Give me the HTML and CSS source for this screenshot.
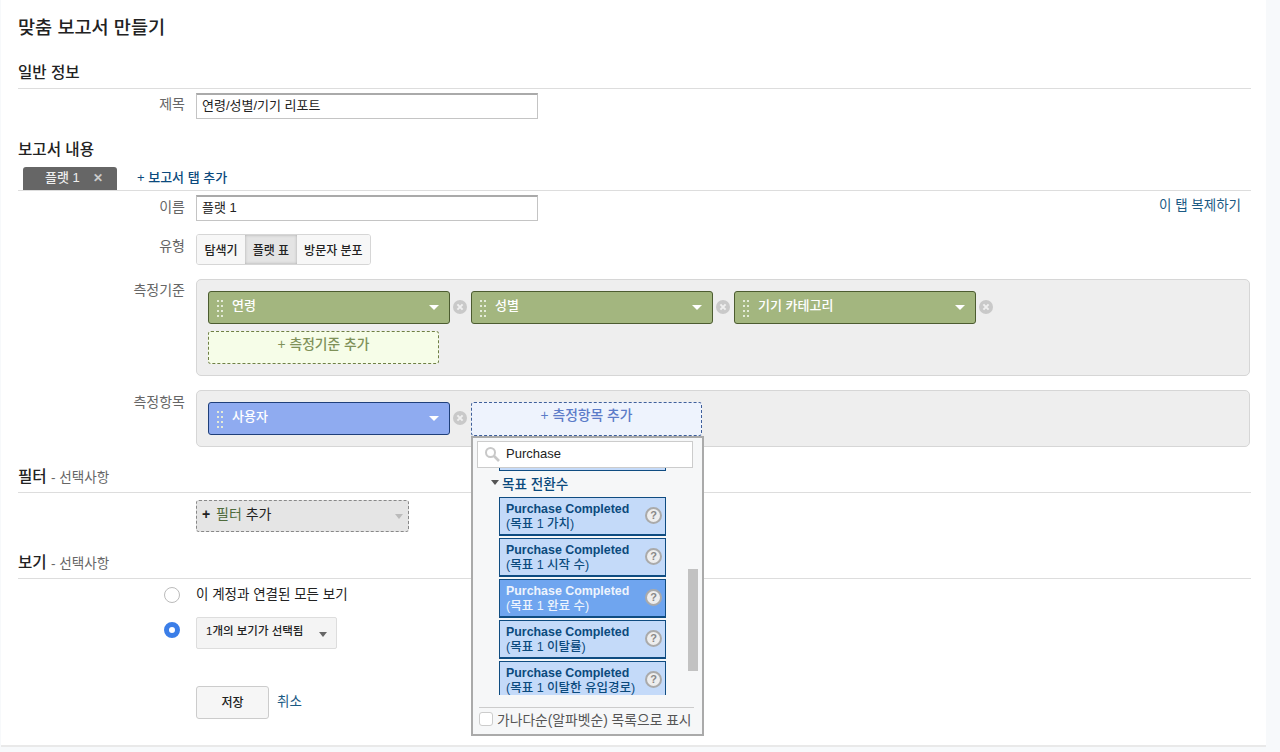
FILE: index.html
```html
<!DOCTYPE html>
<html lang="ko">
<head>
  <meta charset="UTF-8" />
  <title>맞춤 보고서 만들기</title>
  <link rel="stylesheet" href="styles.css">
</head>
<body>
  <svg class="defs" width="0" height="0">
    <symbol id="remove" viewBox="0 0 14 14">
      <circle cx="7" cy="7" r="7" fill="#c9c9c9"/>
      <path d="M4.4 4.4l5.2 5.2M9.6 4.4l-5.2 5.2" stroke="#efefef" stroke-width="2"/>
    </symbol>
    <symbol id="grip" viewBox="0 0 8 18">
      <path d="M1 1h2v2H1zM5 1h2v2H5zM1 6h2v2H1zM5 6h2v2H5zM1 11h2v2H1zM5 11h2v2H5zM1 16h2v2H1zM5 16h2v2H5z" fill="#e4ebd8"/>
    </symbol>
  </svg>

  <main class="panel">
    <h1>맞춤 보고서 만들기</h1>

    <h2 class="sec sec-info">일반 정보</h2>
    <div class="row row-title">
      <label>제목</label>
      <input class="txt" type="text" value="연령/성별/기기 리포트" />
    </div>

    <h2 class="sec-plain">보고서 내용</h2>
    <div class="tabs">
      <div class="tab">플랫 1 <span class="tab-x">✕</span></div>
      <a class="tab-add" href="#">+ 보고서 탭 추가</a>
    </div>

    <div class="row row-name">
      <label>이름</label>
      <input class="txt" type="text" value="플랫 1" />
      <a class="dup" href="#">이 탭 복제하기</a>
    </div>

    <div class="row row-type">
      <label>유형</label>
      <div class="seg">
        <button>탐색기</button><button class="on">플랫 표</button><button>방문자 분포</button>
      </div>
    </div>

    <div class="row row-dim">
      <label>측정기준</label>
      <div class="box">
        <div class="pills">
          <div class="pill green"><svg class="grip"><use href="#grip"/></svg><span>연령</span><i class="caret"></i></div>
          <svg class="rm"><use href="#remove"/></svg>
          <div class="pill green"><svg class="grip"><use href="#grip"/></svg><span>성별</span><i class="caret"></i></div>
          <svg class="rm"><use href="#remove"/></svg>
          <div class="pill green"><svg class="grip"><use href="#grip"/></svg><span>기기 카테고리</span><i class="caret"></i></div>
          <svg class="rm"><use href="#remove"/></svg>
        </div>
        <div class="add add-green">+ 측정기준 추가</div>
      </div>
    </div>

    <div class="row row-metric">
      <label>측정항목</label>
      <div class="box">
        <div class="pills">
          <div class="pill blue"><svg class="grip"><use href="#grip"/></svg><span>사용자</span><i class="caret"></i></div>
          <svg class="rm"><use href="#remove"/></svg>
          <div class="add-wrap">
            <div class="add add-blue">+ 측정항목 추가</div>
            <div class="popup">
              <div class="search">
                <svg width="16" height="16" viewBox="0 0 16 16"><circle cx="6.5" cy="6.5" r="4.5" fill="none" stroke="#c8c8c8" stroke-width="2"/><path d="M10 10l5 5" stroke="#c8c8c8" stroke-width="2.6"/></svg>
                <span>Purchase</span>
              </div>
              <div class="list">
                <div class="list-clip"></div>
                <div class="group"><i class="group-caret"></i>목표 전환수</div>
                <div class="item"><strong>Purchase Completed</strong><br>(목표 1 가치)<b>?</b></div>
                <div class="item"><strong>Purchase Completed</strong><br>(목표 1 시작 수)<b>?</b></div>
                <div class="item sel"><strong>Purchase Completed</strong><br>(목표 1 완료 수)<b>?</b></div>
                <div class="item"><strong>Purchase Completed</strong><br>(목표 1 이탈률)<b>?</b></div>
                <div class="item"><strong>Purchase Completed</strong><br>(목표 1 이탈한 유입경로)<b>?</b></div>
                <div class="thumb"></div>
              </div>
              <div class="sort"><i class="check"></i>가나다순(알파벳순) 목록으로 표시</div>
            </div>
          </div>
        </div>
      </div>
    </div>

    <h2 class="sec sec-filter">필터 <small>- 선택사항</small></h2>
    <div class="row row-filter">
      <label></label>
      <div class="filter"><b>+</b> <em>필터</em> 추가<i class="caret-grey"></i></div>
    </div>

    <h2 class="sec sec-view">보기 <small>- 선택사항</small></h2>
    <div class="row row-radio">
      <label><i class="radio"></i></label>
      <span class="radio-text">이 계정과 연결된 모든 보기</span>
    </div>
    <div class="row row-radio2">
      <label><i class="radio checked"></i></label>
      <div class="views">1개의 보기가 선택됨<i class="caret-dark"></i></div>
    </div>

    <div class="row row-save">
      <label></label>
      <button class="save">저장</button>
      <a class="cancel" href="#">취소</a>
    </div>
  </main>
</body>
</html>
```

FILE: styles.css
```css
* { box-sizing: border-box; }
html, body { height: 100%; }
body {
  margin: 0;
  background: #f7f9fb;
  color: #222;
  font-family: "Liberation Sans", "Noto Sans CJK KR", sans-serif;
  font-size: 13px;
  overflow: hidden;
}
.defs { position: absolute; }
.panel {
  width: 1265px;
  height: 747px;
  margin-left: 1px;
  padding: 0 15px 0 17px;
  background: #fff;
  border-bottom: 2px solid #e9e9e9;
}
h1 {
  margin: 0;
  padding-top: 16px;
  height: 63px;
  font-size: 18.6px;
  line-height: 24px;
  font-weight: 500;
  color: #222;
}
.sec {
  margin: 0;
  height: 26px;
  line-height: 20px;
  font-size: 15.6px;
  font-weight: 500;
  border-bottom: 1px solid #ddd;
}
.sec small { font-size: 13.6px; font-weight: 400; color: #666; }
.sec-plain {
  margin: 19px 0 0;
  height: 20px;
  line-height: 23px;
  font-size: 15.6px;
  font-weight: 500;
}
.row { display: flex; position: relative; }
.row label {
  width: 167px;
  margin-right: 11px;
  flex: none;
  text-align: right;
  color: #666;
  font-size: 14px;
  line-height: 22px;
}
.row-title { margin-top: 4px; height: 26px; }
.txt {
  width: 342px;
  height: 26px;
  padding: 0 5px 4px;
  border: 1px solid #c4c4c4;
  border-top: 2px solid #aaa;
  font: inherit;
  font-size: 13px;
  color: #222;
  outline: none;
}
.tabs {
  display: flex;
  margin-top: 9px;
  height: 24px;
  border-bottom: 1px solid #ddd;
}
.tab {
  margin-left: 5px;
  width: 94px;
  height: 23px;
  padding-left: 22px;
  background: #666;
  color: #eee;
  border-radius: 3px 3px 0 0;
  font-size: 13px;
  font-weight: 500;
  line-height: 22px;
}
.tab-x { margin-left: 10px; font-size: 12px; font-weight: 700; color: #ccc; }
.tab-add {
  margin-left: 20px;
  color: #0b4a7d;
  font-size: 13px;
  font-weight: 500;
  line-height: 22px;
  text-decoration: none;
}
.row-name { margin-top: 4px; height: 26px; }
.row-name label { line-height: 24px; }
.dup {
  position: absolute;
  right: 10px;
  top: 1px;
  color: #1b5a84;
  font-size: 13.5px;
  line-height: 20px;
  text-decoration: none;
}
.row-type { margin-top: 13px; height: 31px; }
.row-type label { line-height: 25px; }
.seg {
  display: flex;
  height: 31px;
  border: 1px solid #d6d6d6;
  border-radius: 3px;
  overflow: hidden;
}
.seg button {
  padding: 0 7.5px;
  border: 0;
  background: #f7f7f7;
  font: inherit;
  font-size: 12px;
  font-weight: 500;
  color: #222;
}
.seg .on {
  background: #e4e4e4;
  box-shadow: inset 0 0 3px #aaa;
}
.row-dim { margin-top: 14px; height: 97px; }
.row-metric { margin-top: 14px; height: 57px; }
.row-metric label { line-height: 24px; }
.box {
  flex: 1;
  margin-right: 1px;
  padding: 11px 11px 0;
  background: #eee;
  border: 1px solid #d6d6d6;
  border-radius: 5px;
}
.pills { display: flex; align-items: flex-start; }
.pill {
  position: relative;
  display: flex;
  width: 242px;
  height: 33px;
  padding-left: 7px;
  border-radius: 3px;
  color: #fff;
  font-size: 13px;
  font-weight: 500;
  line-height: 27px;
}
.pill.green { background: #a3b67f; border: 1px solid #4c5c30; }
.pill.blue { background: #8fabf0; border: 1px solid #1f3f7a; }
.grip { width: 8px; height: 18px; margin: 7px 8px 0 0; flex: none; }
.caret {
  position: absolute;
  right: 10px;
  top: 13px;
  border-left: 5px solid transparent;
  border-right: 5px solid transparent;
  border-top: 5px solid #fff;
}
.rm { width: 14px; height: 14px; margin: 9px 4px 0 3px; flex: none; }
.add {
  height: 33px;
  border-radius: 3px;
  font-size: 13.8px;
  line-height: 25px;
  text-align: center;
}
.add-green {
  width: 231px;
  margin-top: 7px;
  background: #f6fde8;
  border: 1px dashed #6f7f45;
  color: #7f9159;
  font-weight: 500;
}
.add-wrap { position: relative; width: 231px; }
.add-blue {
  height: 34px;
  background: #eef3fd;
  border: 1px dashed #3f5f9a;
  color: #5b7bc8;
  font-weight: 500;
}
.popup {
  position: absolute;
  left: 0;
  top: 34px;
  width: 233px;
  height: 300px;
  z-index: 5;
  background: #f6f7f8;
  border: 2px solid #aaa;
}
.search {
  display: flex;
  align-items: center;
  gap: 6px;
  margin: 3px 0 0 4px;
  width: 216px;
  height: 27px;
  padding: 0 0 2px 6px;
  background: #fff;
  border: 1px solid #ccc;
  font-size: 13px;
  color: #222;
}
.list {
  position: relative;
  height: 227px;
  overflow: hidden;
}
.list-clip {
  margin-left: 26px;
  width: 167px;
  height: 3px;
  background: #c4daf9;
  border: 1px solid #0f4c81;
  border-top: 0;
}
.group {
  display: flex;
  align-items: center;
  height: 23px;
  margin: 0 0 3px 18px;
  color: #0b4a7d;
  font-size: 13.6px;
  font-weight: 500;
}
.group-caret {
  margin-right: 3px;
  border-left: 4px solid transparent;
  border-right: 4px solid transparent;
  border-top: 5px solid #555;
}
.item {
  position: relative;
  width: 167px;
  height: 39px;
  margin: 0 0 2px 26px;
  padding: 4px 0 0 6px;
  background: #c4daf9;
  border: 1px solid #0f4c81;
  border-width: 1px 1px 2px;
  color: #0b4a7d;
  font-size: 12.5px;
  font-weight: 500;
  line-height: 14.5px;
  white-space: nowrap;
}
.item strong { font-size: 12.4px; font-weight: 700; }
.item b {
  position: absolute;
  right: 3px;
  top: 9px;
  width: 17px;
  height: 17px;
  background: #eee;
  border: 2px solid #aaa;
  border-radius: 50%;
  color: #888;
  font-size: 11px;
  line-height: 13px;
  text-align: center;
}
.item.sel { background: #6fa5ef; color: #eef4fd; }
.thumb {
  position: absolute;
  left: 215px;
  top: 101px;
  width: 10px;
  height: 102px;
  background: #c2c2c2;
}
.sort {
  display: flex;
  align-items: center;
  margin: 12px 0 0 6px;
  padding: 1px 0 0 0;
  width: 215px;
  border-top: 1px solid #ccc;
  color: #555;
  font-size: 13.8px;
  white-space: nowrap;
}
.check {
  width: 14px;
  height: 14px;
  margin-right: 4px;
  flex: none;
  background: #fff;
  border: 1px solid #ccc;
  border-radius: 3px;
}
.sec-filter { margin-top: 19px; height: 27px; padding-top: 1px; }
.row-filter { margin-top: 7px; height: 32px; }
.filter {
  position: relative;
  width: 213px;
  height: 32px;
  padding-left: 5px;
  background: #e5e5e5;
  border: 1px dashed #888;
  border-radius: 3px;
  font-size: 14px;
  line-height: 27px;
}
.filter b { margin-right: 2px; }
.filter em { font-style: normal; color: #4f6b3c; }
.caret-grey {
  position: absolute;
  right: 5px;
  top: 13px;
  border-left: 4px solid transparent;
  border-right: 4px solid transparent;
  border-top: 5px solid #bbb;
}
.sec-view { margin-top: 21px; height: 26px; }
.row-radio { margin-top: 6px; height: 20px; }
.row-radio label { display: flex; justify-content: flex-end; padding-right: 5px; }
.radio {
  display: block;
  width: 16px;
  height: 16px;
  margin-top: 2px;
  background: #fff;
  border: 1px solid #bbb;
  border-radius: 50%;
}
.radio.checked {
  margin-top: 5px;
  background: #fff;
  border: 5px solid #3b7ee8;
}
.radio-text { font-size: 13.5px; line-height: 20px; color: #222; }
.row-radio2 { margin-top: 12px; height: 33px; }
.row-radio2 label { display: flex; justify-content: flex-end; padding-right: 5px; }
.views {
  position: relative;
  width: 141px;
  height: 32px;
  padding-left: 9px;
  background: #f4f4f4;
  border: 1px solid #ddd;
  border-radius: 2px;
  font-size: 11.5px;
  font-weight: 500;
  line-height: 27px;
}
.caret-dark {
  position: absolute;
  right: 9px;
  top: 14px;
  border-left: 4px solid transparent;
  border-right: 4px solid transparent;
  border-top: 5px solid #666;
}
.row-save { margin-top: 36px; height: 33px; }
.save {
  width: 73px;
  height: 33px;
  background: #f6f6f6;
  border: 1px solid #ccc;
  border-radius: 3px;
  font: inherit;
  font-size: 12px;
  font-weight: 500;
  padding-bottom: 4px;
  color: #222;
}
.cancel {
  margin-left: 8px;
  color: #1b5a84;
  font-size: 13.5px;
  line-height: 31px;
  text-decoration: none;
}
```
